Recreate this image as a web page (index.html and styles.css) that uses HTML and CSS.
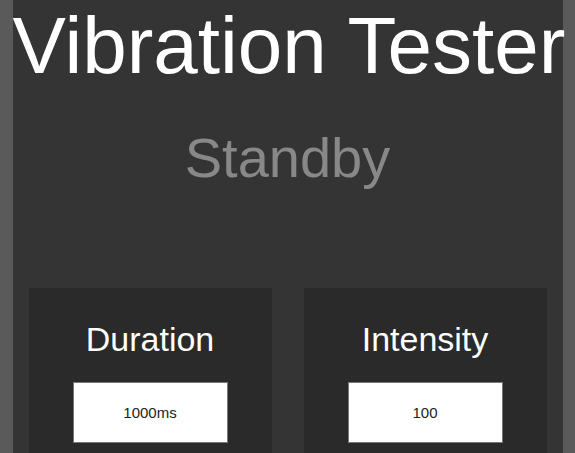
FILE: index.html
```html
<!DOCTYPE html>
<html lang="en">

<head>
    <meta charset="UTF-8">
    <meta name="viewport" content="width=device-width, initial-scale=1.0">
    <title>Vibration Tester</title>
    <link rel="stylesheet" href="styles.css">
</head>

<body>
    <div class="app">
        <h1 class="title">Vibration Tester</h1>
        <p class="status">Standby</p>

        <div class="controls">
            <div class="control">
                <h2 class="control-label">Duration</h2>
                <input class="control-input" type="text" value="1000ms">
            </div>
            <div class="control">
                <h2 class="control-label">Intensity</h2>
                <input class="control-input" type="text" value="100">
            </div>
        </div>
    </div>
</body>

</html>
```

FILE: styles.css
```css
* {
    margin: 0;
    padding: 0;
    box-sizing: border-box;
}

body {
    background: #5a5a5a;
    font-family: "Liberation Sans", Arial, sans-serif;
    color: #fff;
}

.app {
    max-width: 550px;
    min-height: 100vh;
    margin: 0 auto;
    background: #343434;
}

.title {
    font-size: 80px;
    font-weight: normal;
    text-align: center;
    white-space: nowrap;
}

.status {
    margin-top: 33px;
    font-size: 56px;
    color: #888;
    text-align: center;
}

.controls {
    display: grid;
    grid-template-columns: 1fr 1fr;
    gap: 32px;
    margin-top: 98px;
    padding: 0 16px;
}

.control {
    display: flex;
    flex-direction: column;
    align-items: center;
    padding: 32px 0;
    background: #2a2a2a;
}

.control-label {
    font-size: 34px;
    font-weight: normal;
}

.control-input {
    width: 155px;
    height: 61px;
    margin-top: 23px;
    border: 1px solid #777;
    background: #fff;
    color: #222;
    font-family: "Liberation Sans", Arial, sans-serif;
    font-size: 15px;
    text-align: center;
}
```
